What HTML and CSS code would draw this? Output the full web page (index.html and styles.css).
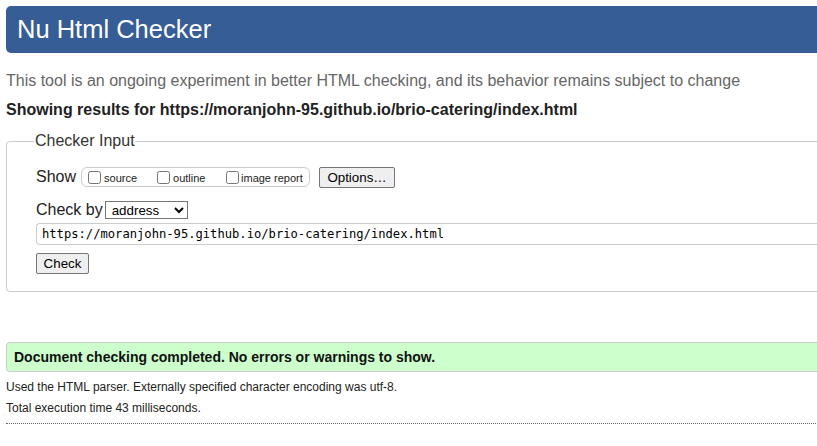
FILE: index.html
```html
<!DOCTYPE html>
<html lang="en">
<head>
<meta charset="utf-8">
<title>Nu Html Checker</title>
<link rel="stylesheet" href="styles.css">
</head>
<body>
<div class="page">
  <h1 class="title">Nu Html Checker</h1>
  <p class="intro">This tool is an ongoing experiment in better HTML checking, and its behavior remains subject to change</p>
  <p class="showing">Showing results for https://moranjohn-95.github.io/brio-catering/index.html</p>
  <fieldset class="input-box">
    <legend class="legend">Checker Input</legend>
    <div class="row show-row">
      <span class="row-label">Show</span>
      <span class="opts">
        <label class="opt opt-source"><input type="checkbox"><span>source</span></label>
        <label class="opt opt-outline"><input type="checkbox"><span>outline</span></label>
        <label class="opt opt-image"><input type="checkbox"><span>image report</span></label>
      </span>
      <button class="btn btn-options" type="button">Options…</button>
    </div>
    <div class="row by-row">
      <span class="row-label">Check by</span>
      <select class="sel"><option>address</option></select>
    </div>
    <div class="url">https://moranjohn-95.github.io/brio-catering/index.html</div>
    <button class="btn btn-check" type="button">Check</button>
  </fieldset>
  <p class="success">Document checking completed. No errors or warnings to show.</p>
  <p class="details details-first">Used the HTML parser. Externally specified character encoding was utf-8.</p>
  <p class="details">Total execution time 43 milliseconds.</p>
  <hr class="rule">
</div>
</body>
</html>
```
FILE: styles.css
```css
html, body {
  margin: 0;
  padding: 0;
  overflow: hidden;
  background: #fff;
}
body {
  font-family: "Liberation Sans", Arial, sans-serif;
  color: #222;
}
.page {
  width: 860px;
  padding: 6px 0 0 6px;
}
.title {
  margin: 0;
  height: 47px;
  box-sizing: border-box;
  background: #365d95;
  color: #fff;
  font-weight: normal;
  font-size: 25.5px;
  line-height: 47px;
  padding-left: 11px;
  border-radius: 5px;
}
.intro {
  margin: 18px 0 0;
  color: #666;
  font-size: 16px;
  line-height: 20px;
}
.showing {
  margin: 9px 0 0;
  font-weight: bold;
  font-size: 16px;
  line-height: 20px;
}
.input-box {
  margin: 12px 0 0;
  padding: 16px 0 17px 29px;
  border: 1px solid #ccc;
  border-radius: 4px;
  min-width: 0;
}
.legend {
  padding: 0 1px;
  margin-left: -2px;
  font-size: 16px;
  color: #333;
}
.row {
  display: flex;
  align-items: center;
}
.show-row {
  height: 22px;
}
.row-label {
  font-size: 16px;
  margin-right: 5px;
}
.opts {
  display: inline-flex;
  align-items: center;
  box-sizing: border-box;
  height: 20px;
  width: 229px;
  border: 1px solid #ccc;
  border-radius: 6px;
  padding-left: 6px;
}
.opt {
  display: inline-flex;
  align-items: center;
  font-size: 11px;
}
.opt span {
  position: relative;
  top: 1px;
}
.opt input {
  margin: 0 3px 0 0;
  width: 13px;
  height: 13px;
}
.opt-source { width: 69px; }
.opt-outline { width: 69px; }
.opt-image input { margin-right: 2px; }
.btn {
  font-family: "Liberation Sans", Arial, sans-serif;
  font-size: 13.33px;
  color: #000;
  background: #efefef;
  border: 1px solid #767676;
  border-radius: 2px;
  padding: 0 6px;
  height: 21px;
}
.btn-options {
  margin-left: 9px;
  width: 76px;
}
.by-row {
  margin-top: 12px;
  height: 20px;
}
.by-row .row-label {
  margin-right: 2px;
}
.sel {
  font-family: "Liberation Sans", Arial, sans-serif;
  font-size: 13.33px;
  width: 83px;
  height: 18px;
  border: 1px solid #767676;
  border-radius: 0;
  color: #000;
  background: #fff;
  padding: 0 0 0 2px;
}
.url {
  margin-top: 3px;
  box-sizing: border-box;
  height: 22px;
  border: 1px solid #ccc;
  border-right: none;
  border-radius: 4px 0 0 4px;
  padding-left: 5px;
  font-family: "DejaVu Sans Mono", "Liberation Mono", monospace;
  font-size: 12.15px;
  line-height: 20px;
  color: #000;
}
.btn-check {
  margin-top: 8px;
  width: 53px;
  display: block;
}
.success {
  margin: 50px 0 0;
  box-sizing: border-box;
  height: 30px;
  background: #ccffcc;
  border: 1px solid #ccc;
  border-right: none;
  border-radius: 4px 0 0 4px;
  padding-left: 7px;
  font-weight: bold;
  font-size: 14px;
  line-height: 28px;
  color: #111;
}
.details {
  margin: 8px 0 0;
  font-size: 12px;
  line-height: 13px;
  color: #222;
}
.details-first {
  margin-top: 9px;
}
.rule {
  margin: 8px 0 0;
  border: none;
  border-top: 1px dotted #666;
  height: 0;
}
```
